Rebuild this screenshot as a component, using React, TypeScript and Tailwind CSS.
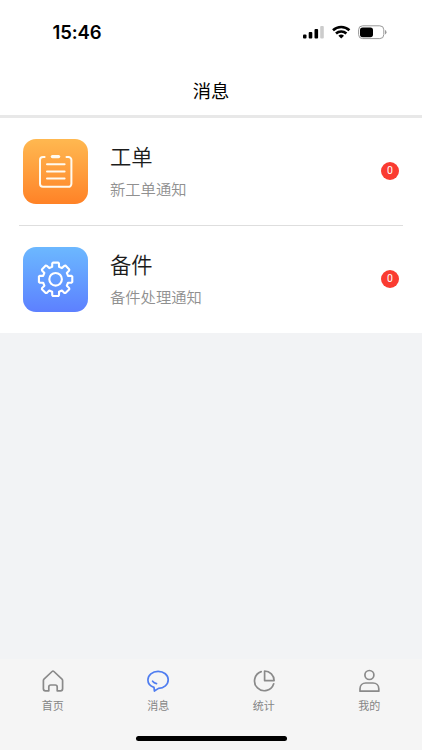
import type { ReactNode } from "react";

const GEAR_TEETH = 8;

function gearPath(cx: number, cy: number) {
    const step = (Math.PI * 2) / GEAR_TEETH;
    const corners = [
        [12.9, -0.27],
        [16.2, -0.21],
        [16.9, -0.16],
        [16.9, 0.16],
        [16.2, 0.21],
        [12.9, 0.27],
    ];
    const points: string[] = [];
    for (let i = 0; i < GEAR_TEETH; i++) {
        for (const [r, offset] of corners) {
            const a = i * step - Math.PI / 2 + offset;
            points.push(`${(cx + r * Math.cos(a)).toFixed(2)} ${(cy + r * Math.sin(a)).toFixed(2)}`);
        }
    }
    return `M${points.join("L")}Z`;
}

function WorkOrderIcon() {
    return (
        <svg viewBox="0 0 65 65" className="size-[65px]" fill="none" stroke="#fffaf0" strokeWidth="2" strokeLinecap="round">
            <path d="M21.6 18H20a3 3 0 0 0-3 3v23.8a3 3 0 0 0 3 3h25.4a3 3 0 0 0 3-3V21a3 3 0 0 0-3-3h-1.9" />
            <path d="M29.4 17.6h6.2" strokeWidth="3.3" />
            <path d="M24 25.3h17.6M24 32.4h17.6M24 39.5h17.6" />
        </svg>
    );
}

function PartsIcon() {
    return (
        <svg viewBox="0 0 65 65" className="size-[65px]" fill="none" stroke="#fff" strokeWidth="2.1" strokeLinejoin="round">
            <path d={gearPath(32.6, 32.3)} />
            <circle cx="32.6" cy="32.3" r="6.3" />
        </svg>
    );
}

function StatusBar() {
    return (
        <div className="flex h-16 items-center justify-between pl-[52.5px] pr-[34px]">
            <span className="font-['Inter'] text-[18.5px] font-semibold leading-none tracking-[-0.1px]">15:46</span>
            <svg viewBox="0 0 85 16" className="h-4 w-[85px]">
                <rect x="0" y="10.5" width="3.5" height="4" rx="1" />
                <rect x="5.7" y="8" width="3.6" height="6.5" rx="1" />
                <rect x="11.5" y="5" width="3.6" height="9.5" rx="1" />
                <rect x="17.2" y="2" width="3.6" height="12.5" rx="1" fill="#ccc" />
                <g fill="none" stroke="#000" strokeWidth="2.6">
                    <path d="M30 6.2a12 12 0 0 1 16.4 0" />
                    <path d="M33 9.5a7.6 7.6 0 0 1 10.4 0" />
                </g>
                <path d="M35.4 11.7a4.4 4.4 0 0 1 5.6 0l-2.8 2.9Z" />
                <rect x="55.6" y="1.8" width="25.2" height="12.8" rx="4" fill="none" stroke="#999" />
                <rect x="57" y="3.4" width="13" height="9.8" rx="2.6" />
                <path d="M82 6v4.4q1.5-.6 1.5-2.2T82 6Z" fill="#999" />
            </svg>
        </div>
    );
}

function MessageRow({ title, desc, count, tile, icon }: {
    title: string;
    desc: string;
    count: number;
    tile: string;
    icon: ReactNode;
}) {
    return (
        <div className="flex h-[107px] items-center pl-[23.4px] pr-[23px]">
            <div className={`size-[65px] shrink-0 overflow-hidden rounded-[13px] bg-linear-to-b ${tile}`}>{icon}</div>
            <div className="ml-[21.6px] flex-1 pt-px">
                <div className="text-[21.3px] font-[350] leading-8 text-[#1c1c1c]">{title}</div>
                <div className="text-[15.3px] font-[350] leading-8 text-[#909090]">{desc}</div>
            </div>
            <span className="mb-px size-[18px] rounded-full bg-[#fa3b31] text-center font-['Roboto'] text-[10.5px] leading-[18.5px] text-white">
                {count}
            </span>
        </div>
    );
}

const tabs = [
    {
        label: "首页",
        color: "text-[#8a8a8a]",
        icon: <path d="M3 10.2 11.1 2.5a1.3 1.3 0 0 1 1.8 0L21 10.2a2 2 0 0 1 .6 1.4v8.2a2 2 0 0 1-2 2h-3.4V18a2 2 0 0 0-2-2H9.8a2 2 0 0 0-2 2v3.8H4.4a2 2 0 0 1-2-2v-8.2A2 2 0 0 1 3 10.2Z" />,
    },
    {
        label: "消息",
        color: "text-[#4f7df0]",
        icon: (
            <>
                <path d="M8 18.4C4.4 17.2 1.9 14.5 1.9 11c0-4.9 4.5-8.7 10.2-8.7s10.1 3.7 10.1 8.5c0 4.9-4.3 8.4-9.7 8.6L8.4 22Z" />
                <path d="M6.6 12.2q1.4 1.9 3.9 2.4" />
            </>
        ),
    },
    {
        label: "统计",
        color: "text-[#8a8a8a]",
        icon: (
            <>
                <path d="M9.2 2.6A9.8 9.8 0 1 0 21.7 14.8" />
                <path d="M12.6 2v9.6h9.5A9.5 9.5 0 0 0 12.6 2Z" />
            </>
        ),
    },
    {
        label: "我的",
        color: "text-[#8a8a8a]",
        icon: (
            <>
                <circle cx="12.4" cy="6" r="4.5" />
                <path d="M3 22.2v-2.4c0-3.5 2.6-5.8 5.8-5.8h7.2c3.2 0 5.8 2.3 5.8 5.8v2.4Z" />
            </>
        ),
    },
];

export default function App() {
    return (
        <div className="flex h-[750px] w-[422px] flex-col overflow-hidden bg-[#f2f3f5] font-['Noto_Sans_CJK_SC',sans-serif]">
            <header className="h-[118px] shrink-0 border-b-[3px] border-[#e8e8e8] bg-white">
                <StatusBar />
                <h1 className="text-center text-[18.3px] font-normal leading-[52px] text-black">消息</h1>
            </header>

            <main className="flex-1">
                <div className="bg-white">
                    <MessageRow
                        title="工单"
                        desc="新工单通知"
                        count={0}
                        tile="from-[#ffb850] to-[#ff8226]"
                        icon={<WorkOrderIcon />}
                    />
                    <div className="mx-[19px] h-px bg-[#dedede]" />
                    <MessageRow
                        title="备件"
                        desc="备件处理通知"
                        count={0}
                        tile="from-[#6cb8ff] to-[#5d80ff]"
                        icon={<PartsIcon />}
                    />
                </div>
            </main>

            <nav className="flex h-[91px] shrink-0 flex-col items-center bg-[#f5f5f5]">
                <div className="grid w-full grid-cols-4 pt-2.5">
                    {tabs.map(tab => (
                        <div key={tab.label} className="flex flex-col items-center">
                            <svg viewBox="0 0 24 24" className={`size-6 ${tab.color}`} fill="none" stroke="currentColor" strokeWidth="1.7" strokeLinecap="round" strokeLinejoin="round">
                                {tab.icon}
                            </svg>
                            <span className="mt-1 text-[11px] leading-4 text-[#858585]">{tab.label}</span>
                        </div>
                    ))}
                </div>
                <div className="mt-auto mb-[9px] h-[5px] w-[151px] rounded-full bg-black" />
            </nav>
        </div>
    );
}
